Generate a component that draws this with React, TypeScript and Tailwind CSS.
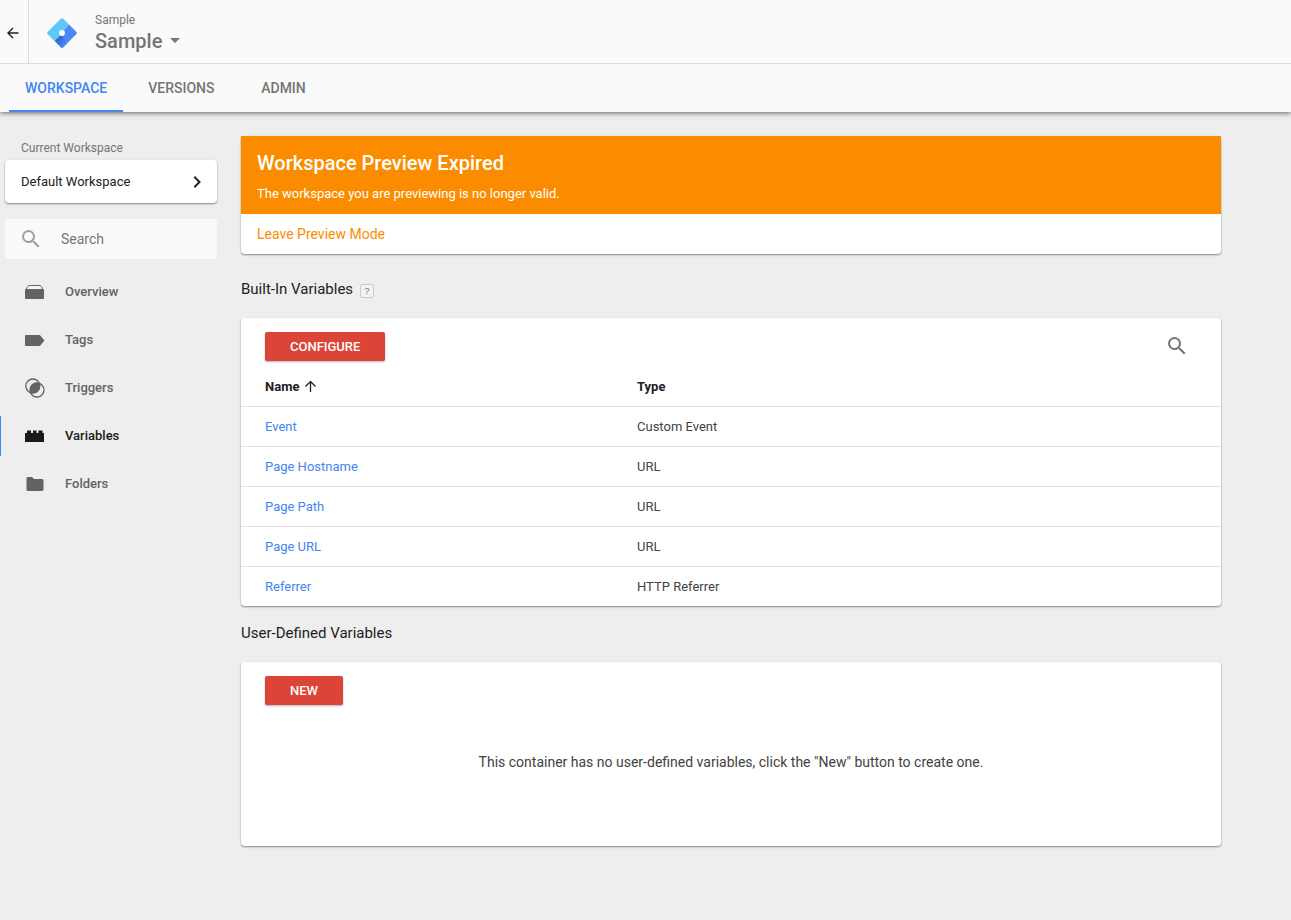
import type { ReactNode } from "react";

const CARD = "rounded-sm bg-white shadow-[0_1px_2px_rgba(0,0,0,0.45)]";

const navItems: { label: string; icon: ReactNode; active?: boolean }[] = [
  {
    label: "Overview",
    icon: (
      <>
        <path d="M1.500 9C2 6.500 3.500 5.500 5 5.500h9c1.500 0 3 1 3.500 3.500" fill="#f5f5f5" stroke="currentColor" />
        <path d="M1 9h17a1 1 0 0 1 1 1v8a1 1 0 0 1-1 1H1a1 1 0 0 1-1-1v-8a1 1 0 0 1 1-1z" />
      </>
    ),
  },
  { label: "Tags", icon: <path d="M1 7h13.500a1 1 0 0 1 .8.4L19.500 12.500l-4.200 5.100a1 1 0 0 1-.8.4H1a1 1 0 0 1-1-1V8a1 1 0 0 1 1-1z" /> },
  {
    label: "Triggers",
    icon: (
      <>
        <circle cx="7.800" cy="10" r="7" fill="none" stroke="currentColor" strokeWidth="1.300" />
        <circle cx="12" cy="14" r="7" fill="none" stroke="currentColor" strokeWidth="1.300" />
        <path d="M14.530 7.470A7 7 0 0 1 5.470 16.530 7 7 0 0 1 14.530 7.470z" />
      </>
    ),
  },
  {
    label: "Variables",
    icon: <path d="M0 9h2V6.500h4V9h2V6.500h3.500V9h2V6.500h4V9H19v9H0z" />,
    active: true,
  },
  {
    label: "Folders",
    icon: <path d="M2.500 5H7l2 2h7.500A1.500 1.500 0 0 1 18.500 8.500v9a1.500 1.500 0 0 1-1.500 1.500h-14A1.500 1.500 0 0 1 1.500 17.500v-11A1.500 1.500 0 0 1 2.500 5z" />,
  },
];

const builtInVariables = [
  { name: "Event", type: "Custom Event" },
  { name: "Page Hostname", type: "URL" },
  { name: "Page Path", type: "URL" },
  { name: "Page URL", type: "URL" },
  { name: "Referrer", type: "HTTP Referrer" },
];

function SearchIcon() {
  return (
    <svg className="size-6 shrink-0" viewBox="0 0 24 24" fill="currentColor" aria-hidden="true">
      <path d="M15.500 14h-.79l-.28-.27A6.471 6.471 0 0 0 16 9.500 6.500 6.500 0 1 0 9.500 16c1.610 0 3.090-.59 4.230-1.570l.27.28v.79l5 4.990L20.490 19l-4.990-5zm-6 0C7.010 14 5 11.990 5 9.500S7.010 5 9.500 5 14 7.010 14 9.500 11.990 14 9.500 14z" />
    </svg>
  );
}

function Logo() {
  return (
    <svg className="size-[30px]" viewBox="0 0 30 30" aria-hidden="true">
      <defs>
        <linearGradient id="logo-shade" gradientUnits="userSpaceOnUse" x1="12" y1="20" x2="18" y2="26">
          <stop offset="0" stopColor="#3568d0" />
          <stop offset="1" stopColor="#4a87f4" />
        </linearGradient>
      </defs>
      <path d="M13.800.8a1.700 1.700 0 0 1 2.400 0L22 6.600 8 23.400.8 16.200a1.700 1.700 0 0 1 0-2.400z" fill="#5bc8f8" />
      <path d="M22 6.600l7.200 7.200a1.700 1.700 0 0 1 0 2.400l-13 13a1.700 1.700 0 0 1-2.400 0L8 23.400z" fill="#4a87f4" />
      <path d="M8 22.800l6-5.800 6.500 7.900-4.300 4.300a1.700 1.700 0 0 1-2.400 0z" fill="url(#logo-shade)" />
      <circle cx="15" cy="15" r="2.900" fill="#fff" />
    </svg>
  );
}

function Header() {
  return (
    <header className="relative bg-[#fafafa] shadow-[0_1px_5px_rgba(0,0,0,0.6)]">
      <div className="flex h-16 border-b border-[#dcdcdc]">
        <a href="#" aria-label="Back" className="flex w-[29px] items-center border-r border-[#dcdcdc] pt-0.5 pl-[6px] text-[#212121]">
          <svg className="size-[14px]" viewBox="0 0 14 14" fill="none" stroke="currentColor" strokeWidth="1.400" aria-hidden="true">
            <path d="M12.500 7H2.500M7 2L2 7l5 5" />
          </svg>
        </a>
        <div className="flex items-center pt-0.5 pl-[18px]">
          <Logo />
          <div className="pl-[18px] text-[#757575]">
            <div className="text-xs leading-4">Sample</div>
            <button type="button" className="flex items-center gap-2 text-xl leading-[26px] font-medium">
              Sample
              <svg className="h-[5px] w-[10px]" viewBox="0 0 10 5" fill="currentColor" aria-hidden="true">
                <path d="M0 0h10L5 5z" />
              </svg>
            </button>
          </div>
        </div>
      </div>
      <nav className="flex h-12 gap-[9px] pl-[9px] text-sm font-medium text-[#757575]" aria-label="Container">
        <a href="#" className="flex min-w-[88px] items-center justify-center border-b-2 border-[#4285f4] px-4 pt-0.5 text-[#4285f4]">
          WORKSPACE
        </a>
        <a href="#" className="flex min-w-[88px] items-center justify-center border-b-2 border-transparent px-4 pt-0.5">
          VERSIONS
        </a>
        <a href="#" className="flex min-w-[88px] items-center justify-center border-b-2 border-transparent px-4 pt-0.5">
          ADMIN
        </a>
      </nav>
    </header>
  );
}

function Sidebar() {
  return (
    <aside className="w-[217px] shrink-0 pt-7">
      <div className="pl-[5px]">
        <div id="workspace-label" className="h-5 pl-4 text-xs leading-4 text-[#757575]">
          Current Workspace
        </div>
        <button type="button" aria-describedby="workspace-label" className={`${CARD} flex h-[43px] w-full items-center justify-between px-4 text-[13px] text-[#212121]`}>
          Default Workspace
          <svg className="h-3 w-2" viewBox="0 0 8 12" fill="none" stroke="currentColor" strokeWidth="2" aria-hidden="true">
            <path d="M1.300.8L6.500 6l-5.200 5.200" />
          </svg>
        </button>
        <label className="mt-4 flex h-10 items-center gap-[18px] rounded-sm bg-[#fafafa] pl-[14px] text-[#9e9e9e]">
          <SearchIcon />
          <input
            type="search"
            aria-label="Search"
            placeholder="Search"
            className="w-full min-w-0 bg-transparent text-sm outline-none placeholder:text-[#757575]"
          />
        </label>
      </div>
      <nav className="mt-[13px] flex flex-col gap-2" aria-label="Workspace">
        {navItems.map((item) => (
          <a
            key={item.label}
            href="#"
            aria-current={item.active ? "page" : undefined}
            className={`flex h-10 items-center gap-5 border-l pl-6 text-[13px] font-medium ${
              item.active ? "border-[#4285f4] text-[#1a1a1a]" : "border-transparent text-[#636363]"
            }`}
          >
            <svg className="h-6 w-5" viewBox="0 0 20 24" fill="currentColor" aria-hidden="true">
              {item.icon}
            </svg>
            {item.label}
          </a>
        ))}
      </nav>
    </aside>
  );
}

function RedButton({ children }: { children: ReactNode }) {
  return (
    <button type="button" className="h-[29px] rounded-xs bg-[#db4437] px-[25px] text-[13px] font-medium text-white shadow-[0_1px_2px_rgba(0,0,0,0.3)]">
      {children}
    </button>
  );
}

export default function App() {
  return (
    <div className="min-h-screen bg-[#eee] font-[Roboto,sans-serif] text-[#424242]">
      <Header />
      <div className="flex gap-6">
        <Sidebar />
        <main className="mr-[70px] max-w-[980px] min-w-0 flex-1 pt-6 pb-10">
          <section className={CARD}>
            <div className="bg-[#fb8c00] px-4 pt-[15px] pb-2 text-white">
              <h1 className="text-xl leading-6 font-medium">Workspace Preview Expired</h1>
              <p className="mt-[7px] text-[13px] leading-6">The workspace you are previewing is no longer valid.</p>
            </div>
            <div className="flex h-10 items-center px-4">
              <a href="#" className="text-sm text-[#fb8c00]">Leave Preview Mode</a>
            </div>
          </section>

          <h2 className="mt-6 flex h-10 items-start gap-[7px] pt-px text-[15px] leading-5 text-[#212121]">
            Built-In Variables
            <button type="button" aria-label="Help" className="mt-[5px] size-[14px] rounded-xs border border-[#ccc] bg-[#f3f3f3] font-['Liberation_Sans',sans-serif] text-[9px] leading-3 text-[#777]">
              ?
            </button>
          </h2>
          <section className={CARD}>
            <div className="flex justify-between pt-[14px] pr-8 pl-6">
              <RedButton>CONFIGURE</RedButton>
              <button type="button" aria-label="Search variables" className="pb-0.5 text-[#757575]">
                <SearchIcon />
              </button>
            </div>
            <table className="mt-[5px] w-full table-fixed border-separate border-spacing-0 text-left text-[13px] leading-5">
              <thead>
                <tr className="text-[#212121]">
                  <th className="w-[372px] pt-[11px] pb-[9px] pl-6 font-bold">
                    <span className="flex items-center gap-[6px]">
                      Name
                      <svg className="size-3" viewBox="0 0 12 12" fill="none" stroke="currentColor" strokeWidth="1.300" aria-label="Sorted ascending">
                        <path d="M5.500 11V1M.5 5.500l5-5 5 5" />
                      </svg>
                    </span>
                  </th>
                  <th className="pt-[11px] pb-[9px] pl-6 font-bold">Type</th>
                </tr>
              </thead>
              <tbody>
                {builtInVariables.map((variable) => (
                  <tr key={variable.name}>
                    <td className="border-t border-[#e0e0e0] pt-[10px] pb-[9px] pl-6">
                      <a href="#" className="text-[#4285f4]">{variable.name}</a>
                    </td>
                    <td className="border-t border-[#e0e0e0] pt-[10px] pb-[9px] pl-6">{variable.type}</td>
                  </tr>
                ))}
              </tbody>
            </table>
          </section>

          <h2 className="mt-4 h-10 pt-px text-[15px] leading-5 text-[#212121]">User-Defined Variables</h2>
          <section className={CARD}>
            <div className="pt-[14px] pl-6">
              <RedButton>NEW</RedButton>
            </div>
            <p className="px-6 pt-[47px] pb-[74px] text-center text-sm">
              This container has no user-defined variables, click the "New" button to create one.
            </p>
          </section>
        </main>
      </div>
    </div>
  );
}
